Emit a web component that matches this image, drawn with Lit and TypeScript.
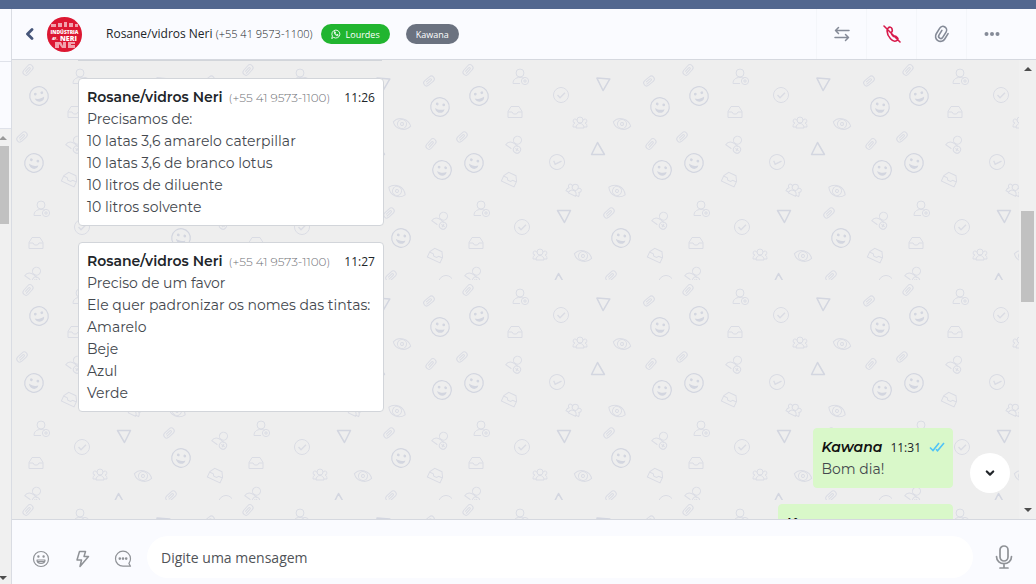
import { LitElement, html, svg, css, unsafeCSS } from "lit";
import { customElement, property } from "lit/decorators.js";

/* ---------- wallpaper tile: 220 x 220, repeated behind the conversation ---------- */

const shapes: Record<string, string> = {
  clip: `<g transform="rotate(42)"><rect x="-3" y="-6" width="6" height="12" rx="3"/><path d="M-1 3v-5a1 1 0 0 1 2 0v6"/></g>`,
  smile: `<g stroke="#d3d6e0"><circle r="9.3" stroke-width="1.2"/><g fill="#d3d6e0" stroke="none"><circle cx="-3.2" cy="-2.6" r="1.4"/><circle cx="3.4" cy="-2.6" r="1.4"/><path d="M-4.800 1.600c3 1.600 6.600 1.600 9.600 0 0 5.400-8 5.800-9.600 0z"/></g></g>`,
  user: `<circle cx="-1" cy="-4" r="4"/><path d="M-1 6.500h-7c0-4 2.500-6 7-6 2 0 3 .3 4 1"/><circle cx="4" cy="4" r="3.600"/><path d="M4 2v4M2 4h4"/>`,
  check: `<circle r="7.500"/><path d="M-3.500 0l2.500 2.700 5-5" stroke-width="1.400"/>`,
  tri: `<path d="M-6.500-5.500h13l-6 12z" stroke="#d3d6e0" stroke-width="1.500" stroke-linejoin="round"/>`,
  tray: `<path d="M-7 5.500v-6l3-5h8l3 5v6zM-7 0h4l1.500 2h3l1.500-2h4"/>`,
  group: `<circle cy="-3" r="3"/><path d="M-4 5c0-6 8-6 8 0zM-3-2.500a2 2 0 1 0-2 2.500c-1.500.5-2 2-2 4h3M3-2.500a2 2 0 1 1 2 2.500c1.500.5 2 2 2 4h-3"/>`,
  eye: `<path d="M-9 0c4-7 14-7 18 0-4 7-14 7-18 0z"/><circle r="4.500"/><circle r="1.500"/>`,
};

const items: [string, number, number, number][] = [
  ["clip", 16, 10, 0], ["smile", 27, 36, -12], ["smile", 208, 47, 8], ["clip", 197, 21, 8],
  ["user", 69, 17, 0], ["check", 109, 35, 0], ["tri", 151, 24, 4], ["tray", 63, 52, 0],
  ["group", 128, 63, 0], ["eye", 170, 64, 14], ["clip", 10, 77, 5], ["clip", 199, 84, 0],
  ["user", 64, 84, 35], ["tri", 146, 89, 180], ["check", 105, 102, 20], ["smile", 22, 103, 12],
  ["smile", 210, 110, 6], ["tray", 58, 119, 25], ["group", 122, 130, 25], ["eye", 165, 131, 25],
  ["user", 30, 149, 0], ["user", 210, 160, 35], ["check", 70, 167, 0], ["tri", 112, 156, 0],
  ["clip", 157, 153, 5], ["smile", 169, 178, 10], ["tray", 24, 183, 0], ["tray", 204, 195, 25],
  ["group", 88, 195, 0], ["eye", 131, 196, 16], ["user", 23, 215, 35], ["check", 214, 223, 0],
  ["tri", 107, 220, 180], ["clip", 159, 216, 5],
];

const tile =
  `<svg xmlns="http://www.w3.org/2000/svg" width="220" height="220"><g fill="none" stroke="#dadce4" stroke-width="1">` +
  items.map(([n, x, y, r]) => `<g transform="translate(${x} ${y}) rotate(${r})">${shapes[n]}</g>`).join("") +
  `</g></svg>`;
const wallpaper = unsafeCSS(`url("data:image/svg+xml,${encodeURIComponent(tile)}")`);

/* ---------- icons ---------- */

const icon = (size: number, body: unknown, width = 1.5) => html`<svg
  width=${size} height=${size} viewBox="0 0 ${size} ${size}" fill="none" stroke="currentColor"
  stroke-width=${width} stroke-linecap="round" stroke-linejoin="round" aria-hidden="true">${body}</svg>`;

const icons = {
  back: icon(12, svg`<path d="M8 1.500 3.500 6 8 10.500"/>`, 2.8),
  down: icon(12, svg`<path d="M2.800 4.500 6 7.600l3.200-3.100"/>`, 2.2),
  swap: icon(16, svg`<path d="M15 4.500H1.500M4.500 1.500l-3 3 3 3M1 11.500h13.500M11.500 8.500l3 3-3 3"/>`),
  mutedCall: icon(18, svg`<path d="M5 3.200C6.500 1.500 8.500 2 9 3.800l.3 1.700c.1 1-.4 1.600-1.300 2 .4 1.600 1.300 3 2.600 4 .8-.6 1.700-.6 2.500 0l1.200 1c1 .9.800 2-.2 2.800-2 1.500-4.600.8-6.600-1.500C5 11 3.800 7.500 4.200 4.800M1 1l16 16"/>`, 1.6),
  clip: icon(18, svg`<g transform="rotate(32 9 9)"><path d="M14 5.500v6.300a5 5 0 0 1-10 0V5.200a3.700 3.700 0 0 1 7.400 0v6.300a2.200 2.200 0 0 1-4.400 0V6"/></g>`, 1.6),
  more: icon(16, svg`<g fill="currentColor" stroke="none"><circle cx="2.500" cy="8" r="2"/><circle cx="8" cy="8" r="2"/><circle cx="13.500" cy="8" r="2"/></g>`),
  whatsapp: icon(10, svg`<path d="M.8 9.200l.6-2.100a4 4 0 1 1 1.500 1.500zM3.300 3.200c0 2 1.500 3.500 3.500 3.600l.3-1-1.100-.5-.5.500c-.6-.3-1-.7-1.300-1.300l.4-.5-.4-1z"/>`, 0.9),
  emoji: icon(18, svg`<circle cx="9" cy="9" r="7.500"/><path d="M5 10h8c0 4.500-8 4.500-8 0zM5.500 11.500h7"/><circle cx="6.400" cy="6.500" r=".6"/><circle cx="11.600" cy="6.500" r=".6"/>`, 1.2),
  bolt: icon(18, svg`<path d="M6.500 1.500h6L11 6.500h4.500L7 16.500l1.500-6.500H4z"/>`, 1.5),
  comment: icon(18, svg`<path d="M16.500 16.200h-7.500a7.500 7.500 0 1 1 7.500-7.500c0 1.800-.6 3.300-1.600 4.700z"/><g fill="currentColor"><circle cx="5.800" cy="8.600" r=".7"/><circle cx="9" cy="8.600" r=".7"/><circle cx="12.200" cy="8.600" r=".7"/></g>`, 1.2),
  mic: html`<svg width="18" height="24" viewBox="0 0 18 24" fill="none" stroke="currentColor" stroke-width="1.7"
    stroke-linecap="round" aria-hidden="true"><rect x="5" y="1" width="8" height="15" rx="4"/><path d="M1.500 11.500c0 9.500 15 9.500 15 0M9 19v4M5 23h8"/></svg>`,
  read: html`<svg width="16" height="10" viewBox="0 0 16 10" fill="none" stroke="#4fc3f7" stroke-width="1.600"
    aria-hidden="true"><path d="M1 5.500 4 8.500 10 1M7 7.200 8.500 8.700 15 1"/></svg>`,
};

/* ---------- message bubble ---------- */

@customElement("chat-message")
class ChatMessage extends LitElement {
  @property() author = "";
  @property() phone = "";
  @property() time = "";
  @property({ type: Array }) lines: string[] = [];
  @property({ type: Boolean, reflect: true }) sent = false;

  static styles = css`
    :host {
      display: block;
      box-sizing: border-box;
      max-width: 80%;
      padding: 7px 8px;
      border: 1px solid #d2d5da;
      border-radius: 4px;
      background: #fff;
      color: #44484e;
      font: 14px/22px Montserrat, Inter, sans-serif;
    }
    :host([sent]) {
      padding: 7px;
      border-color: #d9f8c9;
      background: #d9f8c9;
    }
    .head { display: flex; align-items: baseline; height: 22px; white-space: nowrap; }
    .author { font-weight: 600; color: #212529; }
    :host([sent]) .author { font-style: italic; color: #111; }
    .phone { margin-left: 6px; font-size: 12px; font-weight: 300; color: #6f7277; }
    .time {
      margin-left: auto;
      padding-left: 14px;
      font: 12px/22px "Segoe UI", "Open Sans", sans-serif;
      color: #212529;
    }
    :host([sent]) .time { padding-left: 8px; }
    .read { display: flex; align-self: center; margin-left: 8px; }
    .line { margin: 0; }
  `;

  render() {
    return html`
      <div class="head">
        <span class="author">${this.author}</span>
        ${this.phone ? html`<span class="phone">(${this.phone})</span>` : ""}
        ${this.time ? html`<time class="time">${this.time}</time>` : ""}
        ${this.sent && this.time ? html`<span class="read">${icons.read}</span>` : ""}
      </div>
      ${this.lines.map((l) => html`<p class="line">${l}</p>`)}
    `;
  }
}

/* ---------- page ---------- */

@customElement("app-root")
class AppRoot extends LitElement {
  static styles = css`
    :host {
      display: flex;
      flex-direction: column;
      height: 100vh;
      overflow: hidden;
      background: #fafbff;
      color: #212529;
      font-family: "Segoe UI", "Open Sans", "Noto Sans", sans-serif;
    }
    button { display: grid; place-items: center; padding: 0; border: 0; background: none; color: inherit; font: inherit; }
    svg { display: block; }
    .topbar { flex: none; height: 9px; background: #52678f; }
    .body { flex: 1; min-height: 0; display: flex; }

    .side { flex: none; width: 11px; display: flex; flex-direction: column; border-right: 1px solid #d9dce3; }
    .side-head { height: 52px; border-bottom: 1px solid #dfe2ea; }
    .side-tools { height: 66px; border-bottom: 1px solid #dfe2ea; }
    .side-scroll { flex: 1; display: flex; flex-direction: column; align-items: flex-start; background: #f0f0f0; }
    .side-thumb { width: 9px; height: 78px; margin-top: 3px; background: #c1c1c1; }
    .arrow { border: 4px solid transparent; width: 0; }
    .up { border-top: 0; border-bottom-color: #4d4d4d; }
    .dn { border-bottom: 0; border-top-color: #4d4d4d; }
    .side .arrow { margin-left: -1px; }
    .side .up { margin-top: 7px; margin-bottom: 3px; border-bottom-color: #999; }
    .side .dn { margin-top: auto; margin-bottom: 4px; }

    .chat { flex: 1; min-width: 0; display: flex; flex-direction: column; }
    .header { flex: none; height: 50px; display: flex; align-items: center; border-bottom: 1px solid #d5d8df; }
    .back { width: 35px; height: 50px; color: #46567a; }
    .contact { margin: 0 8px 0 24px; font-size: 12px; line-height: 18px; white-space: nowrap; }
    .contact b { font-weight: 500; }
    .contact span { font-size: 11px; font-weight: 300; color: #212529; }
    .tag {
      display: flex;
      align-items: center;
      gap: 5px;
      height: 20px;
      padding: 0 10px;
      margin-right: 16px;
      border-radius: 10px;
      background: #6b7280;
      color: #fff;
      font-size: 9px;
      font-weight: 500;
    }
    .tag.green { background: #21b530; }
    .actions { display: flex; margin-left: auto; margin-right: 20px; }
    .actions button { width: 50px; height: 50px; box-sizing: border-box; border-left: 1px solid #f4f6fa; color: #858b98; }
    .actions .danger { color: #d81b4c; }

    .stage { flex: 1; min-height: 0; position: relative; display: flex; background: #eee; }
    .messages {
      flex: 1;
      min-width: 0;
      overflow: hidden;
      box-sizing: border-box;
      display: flex;
      flex-direction: column;
      align-items: flex-start;
      gap: 16px;
      padding: 0 66px;
      background: ${wallpaper} #eee;
    }
    .messages > * { flex: none; }
    .messages [sent] { align-self: flex-end; }
    .previous { width: 304px; height: 2px; background: linear-gradient(#d2d5da 50%, transparent 50%); }
    .next { min-width: 175px; }
    .scroll { width: 17px; display: flex; flex-direction: column; align-items: center; background: #f0f0f0; }
    .scroll .up { margin-top: 7px; }
    .thumb { width: 13px; height: 91px; margin-top: 140px; background: #c1c1c1; }
    .scroll .dn { margin-top: auto; margin-bottom: 7px; }
    .latest {
      position: absolute;
      right: 26px;
      bottom: 26px;
      width: 40px;
      height: 40px;
      border-radius: 50%;
      background: #fff;
    }

    .composer {
      flex: none;
      display: flex;
      align-items: center;
      padding: 16px 23px 6px 20px;
      border-top: 1px solid #d5d8df;
      color: #8f9297;
    }
    .tools { display: flex; gap: 23px; margin-right: 15px; padding-top: 3px; }
    .composer input {
      flex: 1;
      min-width: 0;
      height: 42px;
      box-sizing: border-box;
      margin-right: 22px;
      padding: 0 14px;
      border: 0;
      border-radius: 21px;
      outline: 0;
      background: #fff;
      font: 14px "Segoe UI", "Open Sans", "Noto Sans", sans-serif;
    }
    .composer input::placeholder { color: #505358; opacity: 1; }
  `;

  render() {
    return html`
      <div class="topbar"></div>
      <div class="body">
        <aside class="side">
          <div class="side-head"></div>
          <div class="side-tools"></div>
          <div class="side-scroll">
            <div class="arrow up"></div>
            <div class="side-thumb"></div>
            <div class="arrow dn"></div>
          </div>
        </aside>
        <main class="chat">
          <header class="header">
            <button class="back" aria-label="Voltar">${icons.back}</button>
            <svg width="35" height="35" viewBox="0 0 35 35" role="img" aria-label="Indústria NERI">
              <defs><clipPath id="round"><circle cx="17.500" cy="17.500" r="17.500" /></clipPath></defs>
              <g clip-path="url(#round)" fill="#fff" font-family="Open Sans, sans-serif" font-weight="800">
                <rect width="35" height="35" fill="#dc1732" />
                <path d="M4 7h5v3H4zM11 6h4v4h-4zM17 5h3v5h-3zM22 6h4v4h-4zM28 7h3v3h-3zM8 25h6l2 4v-4h3v6h-4l-3-4v4H8zM21 25h7v2h-4v1h4v3h-7z" opacity=".6" />
                <text x="17.500" y="16.500" font-size="5" text-anchor="middle">INDÚSTRIA</text>
                <text x="5" y="22.500" font-size="4">4F.</text>
                <text x="13" y="23.500" font-size="7">NERI</text>
              </g>
            </svg>
            <div class="contact"><b>Rosane/vidros Neri</b> <span>(+55 41 9573-1100)</span></div>
            <span class="tag green">${icons.whatsapp}Lourdes</span>
            <span class="tag">Kawana</span>
            <nav class="actions">
              <button aria-label="Transferir">${icons.swap}</button>
              <button class="danger" aria-label="Encerrar">${icons.mutedCall}</button>
              <button aria-label="Anexar">${icons.clip}</button>
              <button aria-label="Mais opções">${icons.more}</button>
            </nav>
          </header>
          <section class="stage">
            <div class="messages">
              <div class="previous"></div>
              <chat-message author="Rosane/vidros Neri" phone="+55 41 9573-1100" time="11:26"
                .lines=${["Precisamos de:", "10 latas 3,6 amarelo caterpillar", "10 latas 3,6 de branco lotus", "10 litros de diluente", "10 litros solvente"]}></chat-message>
              <chat-message author="Rosane/vidros Neri" phone="+55 41 9573-1100" time="11:27"
                .lines=${["Preciso de um favor", "Ele quer padronizar os nomes das tintas:", "Amarelo", "Beje", "Azul", "Verde"]}></chat-message>
              <chat-message sent author="Kawana" time="11:31" .lines=${["Bom dia!"]}></chat-message>
              <chat-message class="next" sent author="Kawana"></chat-message>
            </div>
            <div class="scroll">
              <div class="arrow up"></div>
              <div class="thumb"></div>
              <div class="arrow dn"></div>
            </div>
            <button class="latest" aria-label="Ir para a última mensagem">${icons.down}</button>
          </section>
          <footer class="composer">
            <div class="tools">
              <button aria-label="Emojis">${icons.emoji}</button>
              <button aria-label="Respostas rápidas">${icons.bolt}</button>
              <button aria-label="Comentários">${icons.comment}</button>
            </div>
            <input type="text" aria-label="Mensagem" placeholder="Digite uma mensagem" />
            <button aria-label="Gravar áudio">${icons.mic}</button>
          </footer>
        </main>
      </div>
    `;
  }
}
